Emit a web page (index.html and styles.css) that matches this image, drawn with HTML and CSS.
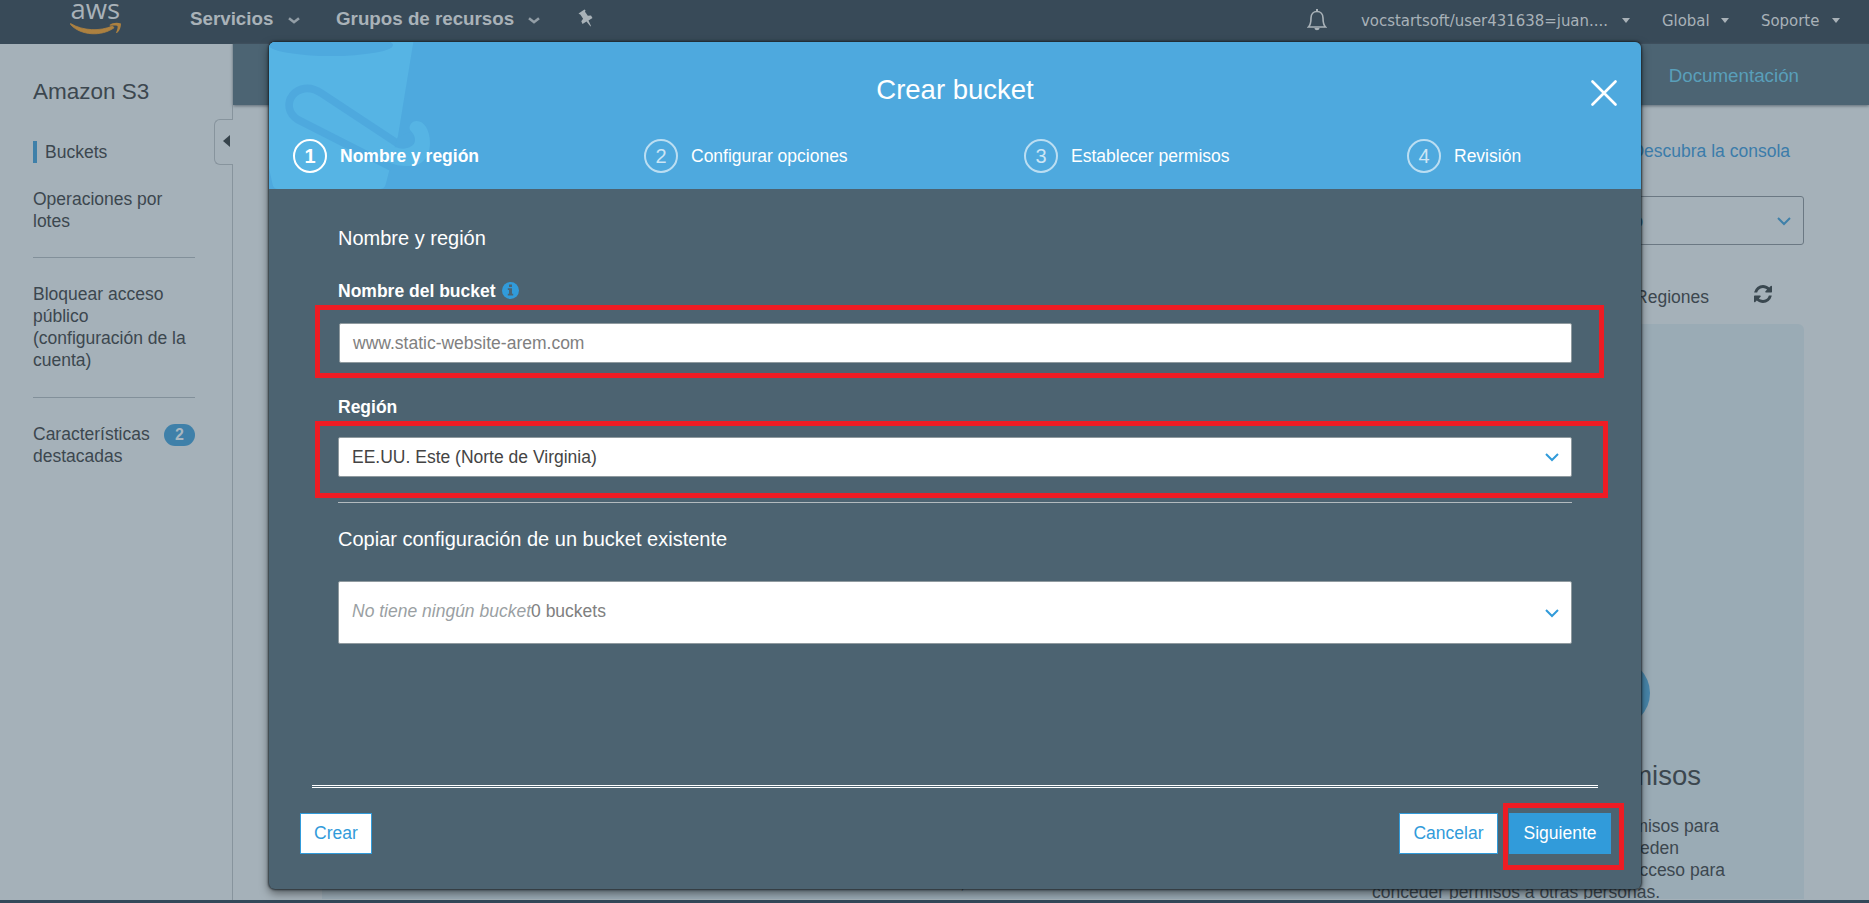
FILE: index.html
```html
<!DOCTYPE html>
<html lang="es">
<head>
<meta charset="utf-8">
<title>Amazon S3 - Crear bucket</title>
<link rel="stylesheet" href="styles.css">
</head>
<body>
<div class="page">
  <header class="nav">
    <svg class="logo" width="56" height="40" viewBox="0 0 56 40">
      <text x="1.500" y="19" class="logo-text">aws</text>
      <path d="M1.500 23.500C14 31 31 31.500 43.500 26l1.500 1.800C33 36.500 12 36 1.500 24.500z" fill="#ad8140" stroke="#ad8140" stroke-width=".8"/>
      <path d="M40.500 25c3-2.500 8-2.800 11.500-1.500 0 3-1 7-4 9.500-1 .3-1-.2-.8-.8 1-2.600 1.800-4.800 1.300-6.300-1.800-.8-4.500-.5-7.500-.2z" fill="#ad8140"/>
    </svg>
    <div class="menu">
      <span class="menu-item servicios">Servicios</span>
      <svg class="chev" width="12" height="8" viewBox="0 0 12 8"><path d="M1 1.200l5 4 5-4"/></svg>
      <span class="menu-item grupos">Grupos de recursos</span>
      <svg class="chev" width="12" height="8" viewBox="0 0 12 8"><path d="M1 1.200l5 4 5-4"/></svg>
      <svg class="pin" width="16" height="18" viewBox="0 0 16 18"><path d="M.5 4.500L6.500.5l1 .8-.5 1.500 2.800 4 3.200-.3 1.500 2.500-4 2.500 2.500 5.500-.5.500-4-5-4 2.500-1.200-2.700 1.800-2.600-2.600-4z"/></svg>
    </div>
    <div class="account">
      <svg class="bell" width="20" height="22" viewBox="0 0 20 22"><path d="M1.500 18c2-2 2.500-4 2.500-9 0-4 2.500-6.500 6-6.500S16 5 16 9c0 5 .5 7 2.500 9z" fill="none" stroke="#a9b2b8" stroke-width="1.600"/><path d="M7.500 19h5c0 3-5 3-5 0zM9 0h2v3H9z" fill="#a9b2b8"/></svg>
      <span class="acc user">vocstartsoft/user431638=juan....</span><i class="caret"></i>
      <span class="acc global">Global</span><i class="caret"></i>
      <span class="acc soporte">Soporte</span><i class="caret"></i>
    </div>
  </header>
  <div class="body">
    <aside class="side">
      <h1 class="side-title">Amazon S3</h1>
      <div class="side-link current">Buckets</div>
      <div class="side-link ops">Operaciones por<br>lotes</div>
      <hr class="side-rule">
      <div class="side-link">Bloquear acceso<br>público<br>(configuración de la<br>cuenta)</div>
      <hr class="side-rule second">
      <div class="features"><div class="side-link">Características<br>destacadas</div><b class="count">2</b></div>
      <div class="collapse"><i class="collapse-arrow"></i></div>
    </aside>
    <main class="main">
      <div class="subbar"><span>Documentación</span></div>
      <div class="content">
        <div class="discover">Descubra la consola</div>
        <div class="filter"><span class="filter-text">o</span><svg class="down" width="14" height="9" viewBox="0 0 14 9"><path d="M1 1l6 6 6-6"/></svg></div>
        <div class="regions"><span>Regiones</span>
          <svg class="refresh" width="18" height="18" viewBox="0 0 1536 1536"><path fill="#3a4850" d="M1511 928q0 5-1 7-64 268-268 434.500T764 1536q-146 0-282.500-55T238 1324l-129 129q-19 19-45 19t-45-19-19-45V960q0-26 19-45t45-19h448q26 0 45 19t19 45-19 45l-137 137q71 66 161 102t187 36q134 0 250-65t186-179q11-17 53-117 8-23 30-23h192q13 0 22.500 9.500t9.500 22.500zm25-800v448q0 26-19 45t-45 19h-448q-26 0-45-19t-19-45 19-45l138-138Q969 256 768 256q-134 0-250 65T332 500q-11 17-53 117-8 23-30 23H50q-13 0-22.500-9.500T18 608v-7q65-268 270-434.500T768 0q146 0 284 55.500T1297 212l130-129q19-19 45-19t45 19 19 45z"/></svg>
        </div>
        <div class="panel">
          <div class="panel-dot"></div>
          <div class="panel-heading">permisos</div>
          <div class="panel-line l1">permisos para</div>
          <div class="panel-line l2">pueden</div>
          <div class="panel-line l3">acceso para</div>
          <div class="panel-line l4"><span>,</span><span>conceder permisos a otras personas.</span></div>
        </div>
      </div>
    </main>
  </div>
  <footer class="foot"></footer>
</div>

<section class="modal">
  <div class="modal-head">
    <svg class="bucket" width="167" height="147" viewBox="27 36 501 441">
      <path class="lt" d="M27 36H460L413 323 388 421 378 460Q374 477 362 477H54Q42 477 38 464L27 415z"/>
      <ellipse class="dk" cx="213" cy="45" rx="186" ry="33"/>
      <path class="band" d="M418 344L185 190C110 140 50 230 115 270L395 412"/>
      <path class="dk" d="M412 323L460 300V360L400 365z"/>
      <path class="lt" d="M384 396C415 411 452 411 475 403C500 392 510 365 510 338C510 300 492 273 470 273C455 273 445 288 450 300C462 312 466 322 465 333C462 352 432 362 408 352L380 350z"/>
    </svg>
    <h2 class="modal-title">Crear bucket</h2>
    <svg class="close" width="26" height="26" viewBox="0 0 26 26"><path d="M1.500 1.500l23 23M24.500 1.500l-23 23"/></svg>
    <div class="steps">
      <div class="step active"><i class="num">1</i>Nombre y región</div>
      <div class="step"><i class="num">2</i>Configurar opciones</div>
      <div class="step"><i class="num">3</i>Establecer permisos</div>
      <div class="step"><i class="num">4</i>Revisión</div>
    </div>
  </div>
  <div class="form">
    <h3 class="section">Nombre y región</h3>
    <div class="label">Nombre del bucket <svg class="info" width="17" height="17" viewBox="0 0 17 17"><circle cx="8.500" cy="8.500" r="8.500" fill="#319bda"/><path fill="#4c6473" d="M7 2.500h3V5H7zM5.800 6.300H10v5.500h1.200v1.800H5.800v-1.800H7V8.100H5.800z"/></svg></div>
    <div class="field name"><span>www.static-website-arem.com</span><div class="mark mark-name"></div></div>
    <div class="label region-label">Región</div>
    <div class="field region"><span>EE.UU. Este (Norte de Virginia)</span><svg class="down" width="14" height="9" viewBox="0 0 14 9"><path d="M1 1l6 6 6-6"/></svg><div class="mark mark-region"></div></div>
    <hr class="form-rule">
    <h3 class="section copy">Copiar configuración de un bucket existente</h3>
    <div class="field source"><span><em>No tiene ningún bucket</em>0 buckets</span><svg class="down" width="14" height="9" viewBox="0 0 14 9"><path d="M1 1l6 6 6-6"/></svg></div>
  </div>
  <div class="modal-foot">
    <div class="foot-rule"></div>
    <div class="buttons">
      <div class="btn create">Crear</div>
      <div class="btn cancel">Cancelar</div>
      <div class="btn next">Siguiente<div class="mark mark-next"></div></div>
    </div>
  </div>
</section>
</body>
</html>
```
FILE: styles.css
```css
* { box-sizing: border-box; }
body { margin: 0; font: 17.5px/22px "Liberation Sans", Arial, sans-serif; color: #3c474f; overflow: hidden; }
h1, h2, h3, hr { margin: 0; font-weight: normal; }
svg { display: block; flex: none; }
.page { width: 1869px; height: 903px; display: flex; flex-direction: column; background: #a5b1b9; }

.nav { height: 44px; flex: none; background: #384a58; color: #a9b2b8; display: flex; align-items: flex-start; padding-left: 69px; }
.logo { overflow: visible; }
.logo-text { font: 27.5px "Open Sans", sans-serif; fill: #a9b2b8; }
.menu { display: flex; align-items: flex-start; padding: 7px 0 0 65px; }
.menu-item { font-size: 18.75px; line-height: 23px; font-weight: bold; white-space: nowrap; }
.servicios { width: 98px; }
.grupos { width: 192px; margin-left: 36px; }
.chev { margin-top: 10px; }
.chev path { fill: none; stroke: #939ea6; stroke-width: 2.6; }
.pin { margin: 2px 0 0 38px; fill: #a9b2b8; }
.account { margin: 9px 0 0 auto; display: flex; align-items: flex-start; padding-right: 29px; font: 16.6px/22px "DejaVu Sans Condensed", "DejaVu Sans", sans-serif; }
.account .bell { margin-right: 34px; }
.acc { white-space: nowrap; padding-top: 1px; }
.user { width: 261px; }
.global { width: 59px; margin-left: 32px; }
.soporte { width: 71px; margin-left: 32px; }
.caret { border: solid transparent; border-width: 5px 4.5px 0; border-top-color: #a9b2b8; margin-top: 9px; }

.body { flex: 1; display: flex; min-height: 0; }
.side { position: relative; width: 233px; border-right: 1px solid #87949d; padding: 34px 37px 0 33px; }
.side-title { font-size: 22.5px; line-height: 28px; margin-bottom: 35px; }
.side-link { white-space: nowrap; }
.current { border-left: 4px solid #3f80a9; padding-left: 8px; }
.ops { margin-top: 25px; }
.side-rule { border: 0; height: 1px; background: #82909a; margin: 25px 0; }
.second { margin-top: 26px; }
.features { display: flex; justify-content: space-between; }
.count { width: 31px; height: 22px; margin-top: 1px; border-radius: 11px; background: #3f80a9; color: #a9b7c0; text-align: center; font-size: 16px; line-height: 22px; }
.collapse { position: absolute; left: 214px; top: 75px; width: 19px; height: 46px; background: #a5b1b9; border: 1px solid #87949d; border-right: 0; border-radius: 6px 0 0 6px; padding: 15px 0 0 8px; }
.collapse-arrow { display: block; width: 0; border: solid transparent; border-width: 6px 7px 6px 0; border-right-color: #36434b; }

.main { flex: 1; display: flex; flex-direction: column; min-width: 0; }
.subbar { height: 61px; flex: none; background: #4c6473; color: #599fba; font-size: 18.75px; padding: 21px 70px 0 0; text-align: right; box-shadow: 0 1px 3px #5e6b75; }
.content { flex: 1; padding: 35px 65px 0 89px; display: flex; flex-direction: column; min-height: 0; }
.discover { text-align: right; color: #3b7caa; padding-right: 14px; }
.filter { height: 49px; margin-top: 34px; border: 1px solid #6b7883; border-radius: 3px; display: flex; align-items: center; justify-content: flex-end; padding-right: 12px; color: #235c86; }
.filter-text { margin-right: 134px; }
.regions { display: flex; justify-content: flex-end; padding: 41px 32px 0 0; height: 79px; }
.refresh { margin: -1px 0 0 45px; }
.panel { flex: 1; min-height: 0; margin-bottom: 1px; overflow: hidden; background: #9aabb5; border-radius: 6px 6px 0 0; padding-top: 335px; }
.panel-dot { width: 68px; height: 68px; border-radius: 50%; background: #4785a9; margin-left: 1260px; }
.panel-heading { font-size: 27.5px; line-height: 34px; margin-top: 31.5px; text-align: right; padding-right: 103px; }
.panel-line { text-align: right; }
.l1 { margin-top: 22.5px; padding-right: 85px; }
.l2 { padding-right: 125px; }
.l3 { padding-right: 79px; }
.l4 { display: flex; justify-content: space-between; padding: 0 144px 0 638px; }
.l4 span:first-child { margin-top: -10px; }
.foot { height: 3px; flex: none; background: #34495a; }

.modal { position: absolute; left: 269px; top: 42px; width: 1372px; height: 847px; display: flex; flex-direction: column; background: #4c6371; border-radius: 6px; box-shadow: 0 0 2px 1px rgba(20,30,36,.75), 0 4px 10px rgba(0,0,0,.5); color: #fff; }
.modal-head { position: relative; height: 147px; flex: none; background: #4ea9de; border-radius: 6px 6px 0 0; overflow: hidden; padding-top: 31px; }
.bucket { position: absolute; left: 0; top: 0; }
.lt { fill: #56b4e4; }
.dk { fill: #4ea9de; }
.band { fill: none; stroke: #4ea9de; stroke-width: 23; }
.modal-title { font-size: 27.5px; line-height: 34px; text-align: center; }
.close { position: absolute; right: 24px; top: 38px; }
.close path { stroke: #fff; stroke-width: 2.6; stroke-linecap: round; }
.steps { position: relative; display: grid; grid-template-columns: 351px 380px 383px auto; padding: 32px 0 0 24px; }
.step { display: flex; align-items: center; height: 34px; white-space: nowrap; }
.num { width: 34px; height: 34px; margin-right: 13px; border: 2px solid rgba(255,255,255,.62); border-radius: 50%; font: 20px/30px "Liberation Sans", sans-serif; text-align: center; color: rgba(255,255,255,.72); }
.active { font-weight: bold; }
.active .num { border: 2.5px solid #fff; color: #fff; font-weight: bold; }

.form { flex: 1; padding: 37px 69px 0; }
.section { font-size: 20px; line-height: 24px; }
.label { font-weight: bold; display: flex; margin-top: 30px; height: 22px; }
.info { margin: 2px 0 0 6px; }
.field { position: relative; height: 40px; background: #fff; border: 1px solid #8f9a9f; border-radius: 2px; display: flex; align-items: center; justify-content: space-between; padding: 0 12px 1px 13px; color: #444; }
.name { margin: 21px 0 0 1px; color: #808080; }
.region-label { margin-top: 33px; }
.region { margin-top: 19px; }
.down { margin-top: 1px; }
.down path { fill: none; stroke: #319bda; stroke-width: 2; }
.filter .down path { stroke: #3f80a9; }
.form-rule { border: 0; height: 1px; background: #b3bbbf; margin-top: 25px; }
.copy { margin-top: 24px; }
.source { margin-top: 30px; height: 63px; color: #808080; padding-bottom: 4px; }
.source em { color: #9a9fa3; }
.source .down { margin-top: 5px; }
.mark { position: absolute; border: 5px solid #ed1c24; pointer-events: none; }
.mark-name { left: -25px; top: -19px; width: 1289px; height: 73px; }
.mark-region { left: -24px; top: -17px; width: 1293px; height: 77px; }

.modal-foot { flex: none; height: 104px; padding: 0 30px 0 31px; }
.foot-rule { height: 3px; margin: 0 13px 0 12px; border: solid #fff; border-width: 1px 0; }
.buttons { display: flex; padding-top: 25px; }
.btn { position: relative; height: 41px; line-height: 22px; padding: 8px 0; border: 1px solid #319bda; background: #fff; color: #319bda; white-space: nowrap; text-align: center; }
.create { width: 72px; }
.cancel { margin-left: auto; width: 99px; }
.next { margin-left: 11px; width: 102px; background: #319bda; color: #fff; }
.mark-next { left: -7px; top: -11px; width: 121px; height: 67px; }
```
